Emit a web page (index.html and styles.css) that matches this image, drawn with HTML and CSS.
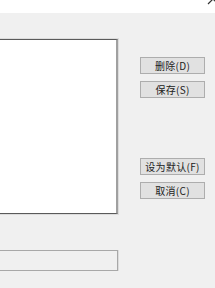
FILE: index.html
```html
<!DOCTYPE html>
<html lang="zh-CN">
<head>
  <meta charset="UTF-8">
  <meta name="viewport" content="width=device-width, initial-scale=1.0">
  <title>设置</title>
  <link rel="stylesheet" href="styles.css">
</head>
<body>
  <div class="titlebar">
    <!-- close glyph, mostly cut off by the window edge -->
    <svg class="close" width="12" height="12" viewBox="0 0 12 12">
      <path d="M1 1 L11 11 M11 1 L1 11" stroke="#333" stroke-width="1.2" fill="none"/>
    </svg>
  </div>

  <div class="main">
    <div class="left">
      <div class="list"><div class="list-inner"></div></div>
      <div class="field"><div class="field-inner"></div></div>
    </div>

    <div class="buttons">
      <button class="btn">删除(D)</button>
      <button class="btn">保存(S)</button>
      <button class="btn btn-gap">设为默认(F)</button>
      <button class="btn">取消(C)</button>
    </div>
  </div>
</body>
</html>
```

FILE: styles.css
```css
html, body {
  margin: 0;
  padding: 0;
}

body {
  width: 215px;
  height: 288px;
  overflow: hidden;
  background: #f0f0f0;
  font-family: "Noto Sans CJK SC", "Noto Sans", sans-serif;
  font-size: 10px;
  color: #000;
}

.titlebar {
  height: 13px;
  background: #fff;
  position: relative;
}

.close {
  position: absolute;
  top: -7px;
  right: -4px;
}

.main {
  display: flex;
  padding-top: 25px;
}

.left {
  width: 124px;
  margin-left: -5px;
}

.list {
  border: 1px solid #dcdcdc;
  border-left: none;
}

.list-inner {
  height: 173px;
  background: #fff;
  border-top: 1px solid #5a5a5a;
  border-bottom: 1px solid #5a5a5a;
  border-right: 2px solid #a0a0a0;
}

.field {
  margin-top: 35px;
  border-right: 1px solid #dcdcdc;
}

.field-inner {
  height: 19px;
  background: #f0f0f0;
  border: 1px solid #a8a8a8;
  border-left: none;
}

.buttons {
  display: flex;
  flex-direction: column;
  gap: 7px;
  margin-left: 21px;
  padding-top: 19px;
}

.btn {
  width: 65px;
  height: 17px;
  padding: 0;
  background: #e1e1e1;
  border: 1px solid #adadad;
  font-family: inherit;
  font-size: 10px;
  line-height: 15px;
  letter-spacing: 0.3px;
  color: #222;
}

.btn-gap {
  margin-top: 53px;
}
```
